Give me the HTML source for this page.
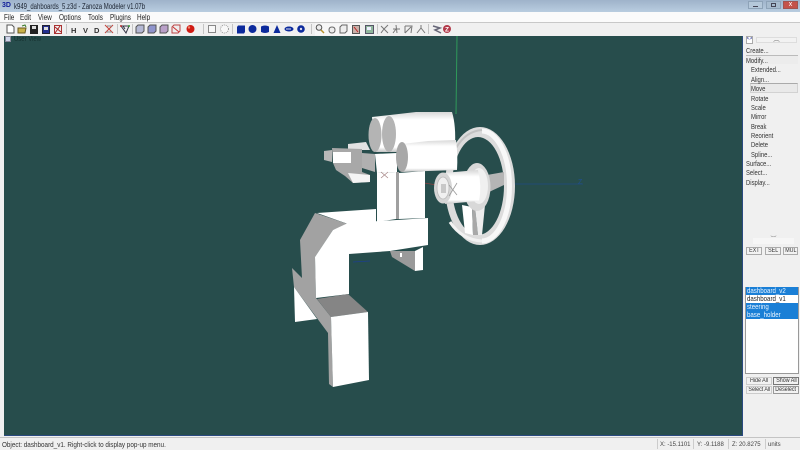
<!DOCTYPE html>
<html><head><meta charset="utf-8">
<style>
html,body{margin:0;padding:0}
body{width:800px;height:450px;overflow:hidden;position:relative;background:#f0f0f0;font-family:"Liberation Sans",sans-serif;color:#222}
.a{position:absolute;white-space:nowrap}
#title{left:0;top:0;width:800px;height:12px;background:linear-gradient(#9fb3ca,#b9cde0)}
#menu{left:0;top:12px;width:800px;height:10px;background:#fbfbfb}
#tb{left:0;top:22px;width:800px;height:14px;background:#f0f0f0;border-top:1px solid #c8c8c8;box-sizing:border-box}
#vp{left:4px;top:36px;width:739px;height:400px;background:#274d4c;border-right:1px solid #2a4a80;border-bottom:1px solid #2a4a80;box-sizing:border-box}
.m{font-size:7.8px;top:12.5px;line-height:10px;color:#222;transform:scaleX(.82);transform-origin:0 0}
.p{font-size:7.2px;line-height:9px;color:#333;transform:scaleX(.82);transform-origin:0 0}
.b{box-sizing:border-box;background:#f2f2f2;border:1px solid #aaa;font-size:6.5px;text-align:center;color:#333;line-height:6px;overflow:hidden}
.b span{display:inline-block;transform:scaleX(.82);transform-origin:50% 50%;margin:0 -6px}
.l{left:746px;width:52px;height:8px;font-size:7.2px;line-height:8px;padding-left:1px;box-sizing:border-box}
.l span{display:inline-block;transform:scaleX(.85);transform-origin:0 0}
.s{background:#1a7fd6;color:#e8f4ff}
.st{font-size:6.8px;top:441px;line-height:8px;color:#444;transform:scaleX(.88);transform-origin:0 0}
.sep{top:24px;width:1px;height:10px;background:#c4c4c4}
</style></head><body>
<div class="a" id="title"></div>
<div class="a" style="left:2px;top:2px;font-size:7px;font-weight:bold;color:#12209a;line-height:8px">3D</div>
<div class="a" style="left:14px;top:1.5px;font-size:8px;line-height:10px;color:#1a2230;transform:scaleX(.75);transform-origin:0 0">k949_dahboards_5.z3d - Zanoza Modeler v1.07b</div>
<div class="a" style="left:748px;top:1px;width:15px;height:8px;background:#b5c8da;border:1px solid #8ea3b8;box-sizing:border-box"><div class="a" style="left:4px;top:4px;width:5px;height:1px;background:#445"></div></div>
<div class="a" style="left:766px;top:1px;width:15px;height:8px;background:#a8bccf;border:1px solid #8ea3b8;box-sizing:border-box"><div class="a" style="left:4px;top:1px;width:5px;height:4px;border:1px solid #445;box-sizing:border-box"></div></div>
<div class="a" style="left:783px;top:1px;width:15px;height:8px;background:#c4524a;border:1px solid #a0534f;box-sizing:border-box;color:#fff;font-size:7px;line-height:6px;text-align:center">x</div>
<div class="a" id="menu"></div>
<div class="a m" style="left:4px">File</div><div class="a m" style="left:20px">Edit</div><div class="a m" style="left:38px">View</div><div class="a m" style="left:59px">Options</div><div class="a m" style="left:88px">Tools</div><div class="a m" style="left:110px">Plugins</div><div class="a m" style="left:137px">Help</div>
<div class="a" id="tb"></div>
<svg class="a" style="left:0;top:22px" width="470" height="14" viewBox="0 22 470 14">
<g stroke-width="1">
<path d="M7 25h5l2 2v6H7z" fill="#fff" stroke="#555"/>
<path d="M18 28h8l-1 5h-7z" fill="#c9b24a" stroke="#6b5a20"/><path d="M22 26l3-1 1 2" fill="none" stroke="#3a7a2a"/>
<rect x="30.500" y="25.500" width="7" height="8" fill="#222" stroke="#222"/><rect x="32" y="26" width="4" height="3" fill="#ddd"/>
<rect x="42.500" y="25.500" width="7" height="8" fill="#24308f" stroke="#223"/><rect x="44" y="27" width="4" height="3" fill="#ddd"/>
<rect x="54.500" y="25.500" width="7" height="8" fill="#eee" stroke="#a33"/><path d="M55 27l6 5M60 26l-5 7" stroke="#a22" fill="none"/>
<text x="71" y="33" font-family="Liberation Sans" font-size="7.5" font-weight="bold" fill="#333">H</text>
<text x="83" y="33" font-family="Liberation Sans" font-size="7.5" font-weight="bold" fill="#333">V</text>
<text x="94" y="33" font-family="Liberation Sans" font-size="7.5" font-weight="bold" fill="#333">D</text>
<path d="M105 25l8 8M113 25l-8 8" stroke="#c8423a" fill="none"/><path d="M107 26h5M106 32h6" stroke="#888" fill="none"/>
<path d="M121 26h8l-3 7zM125 29l-2-3" fill="none" stroke="#334"/><circle cx="121" cy="26" r="1" fill="#b33"/><circle cx="129" cy="26" r="1" fill="#393"/>
<g fill="#b4b8d4" stroke="#555"><path d="M136 27l2-2h6v6l-2 2h-6z"/><path d="M148 27l2-2h6v6l-2 2h-6z" fill="#8f94cc"/><path d="M160 27l2-2h6v6l-2 2h-6z" fill="#b9a0c8"/><path d="M172 27l2-2h6v6l-2 2h-6z" fill="#eee" stroke="#b44"/></g>
<path d="M173 27l6 5" stroke="#c33"/>
<circle cx="190.500" cy="29" r="4" fill="#d01a12"/><circle cx="189" cy="27.500" r="1.200" fill="#f08a70"/>
<rect x="208.500" y="25.500" width="7" height="7" fill="#f8f8f8" stroke="#888"/>
<circle cx="224.500" cy="29" r="4" fill="#f8f8f8" stroke="#999" stroke-dasharray="1 1"/>
<g fill="#0c2a9c"><path d="M237 27l1-1.500h7V32l-1 1.500h-7z"/><circle cx="252.500" cy="29" r="4"/><path d="M261 26.500q4-2 8 0V32q-4 2-8 0z"/><path d="M277 25l3.500 8h-7z"/><ellipse cx="289" cy="29" rx="4.500" ry="2.500"/><circle cx="301" cy="29" r="3.800"/></g>
<circle cx="301" cy="29" r="1.200" fill="#dde"/><path d="M286 29h5" stroke="#dde"/>
<rect x="315" y="23.500" width="45" height="12" fill="#f7f7f7"/>
<circle cx="319" cy="27.500" r="2.800" fill="#eee" stroke="#555"/><path d="M321 30l3 3" stroke="#b8922a" stroke-width="1.500"/>
<path d="M329 30q0-3 3-3t3 3-3 3-3-3" fill="#eee" stroke="#666"/>
<path d="M340 27l2-2h5v6l-2 2h-5z" fill="#eee" stroke="#666"/>
<rect x="352.500" y="25.500" width="7" height="8" fill="#c9b0a8" stroke="#555"/><path d="M354 27l4 5" stroke="#b22"/>
<rect x="365.500" y="25.500" width="8" height="8" fill="#8fb69c" stroke="#556"/><rect x="367" y="27" width="4" height="3" fill="#eef"/>
<g stroke="#777" fill="none"><path d="M381 26l7 7M388 25l-4 4M381 33l3-4"/><path d="M393 29h7M396 25l1 8M393 33l3-4"/><path d="M405 26h7l-1 7M405 33l6-6M405 26v7"/><path d="M417 33l4-5 4 5M421 28v-3"/></g>
<path d="M433 26l7 2-5 2 6 3" stroke="#667" fill="none" stroke-width="1.500"/>
<circle cx="447" cy="29" r="4" fill="#b23a4a"/><text x="445" y="31.500" font-family="Liberation Sans" font-size="6.500" font-weight="bold" fill="#fff">Z</text>
</g>
</svg>
<div class="a sep" style="left:66px"></div><div class="a sep" style="left:117px"></div><div class="a sep" style="left:132px"></div><div class="a sep" style="left:203px"></div><div class="a sep" style="left:232px"></div><div class="a sep" style="left:311px"></div><div class="a sep" style="left:377px"></div><div class="a sep" style="left:428px"></div>

<div class="a" id="vp"></div>
<div class="a" style="left:5px;top:36px;width:6px;height:6px;background:#cfd6ea;border:1px solid #889;box-sizing:border-box"></div>
<div class="a" style="left:14px;top:36px;font-size:7px;line-height:8px;color:#16302f;transform:scaleX(.85);transform-origin:0 0">User View</div>

<svg class="a" style="left:0;top:0" width="744" height="436" viewBox="0 0 744 436">
<defs>
<linearGradient id="cy" x1="0" y1="0" x2="0" y2="1"><stop offset="0" stop-color="#d8d8d8"/><stop offset=".2" stop-color="#fff"/><stop offset=".88" stop-color="#fff"/><stop offset="1" stop-color="#c4c4c4"/></linearGradient>
</defs>
<path d="M457 36L456 114" stroke="#2f9a5a" stroke-width="1" fill="none"/>
<path d="M514 184H583" stroke="#1f4c82" stroke-width=".7" fill="none"/>
<text x="578" y="184" font-family="Liberation Sans" font-size="7" fill="#20508f">Z</text>
<path d="M424 183L437 185" stroke="#8a4040" stroke-width=".7" fill="none"/>
<path d="M353 262L370 261" stroke="#1c3f8f" stroke-width=".8" fill="none"/>

<!-- steering wheel -->
<path fill-rule="evenodd" d="M445 186A35 59 0 1 1 515 186A35 59 0 1 1 445 186ZM452 186A26 49 0 1 0 504 186A26 49 0 1 0 452 186Z" fill="#dcdcdc"/>
<path d="M482 131A27 54 0 0 1 482 241" fill="none" stroke="#f8f8f8" stroke-width="5"/>
<path d="M456 148Q466 131 482 130" fill="none" stroke="#c2c2c2" stroke-width="2"/>
<path d="M450 222Q462 240 482 241" fill="none" stroke="#f2f2f2" stroke-width="3"/>
<path d="M487 175L504 172V185L489 192z" fill="#b5b5b5"/>
<path d="M462 205L472 207L473 235L465 233z" fill="#fff"/>
<path d="M472 207L475 207L478 235L473 235z" fill="#a8a8a8"/>
<path d="M475 207L485 205L482 235L478 235z" fill="#ededed"/>
<ellipse cx="477" cy="187" rx="13.500" ry="24" fill="#d8d8d8"/>
<ellipse cx="479" cy="186" rx="9" ry="18" fill="#f0f0f0"/>
<path d="M443 173L478 170Q482 186 479 201L445 204z" fill="url(#cy)"/>
<ellipse cx="443" cy="188" rx="9" ry="15.500" fill="#d6d6d6"/>
<ellipse cx="443" cy="188" rx="6" ry="11" fill="#f0f0f0" stroke="#bbb" stroke-width=".8"/>
<rect x="441" y="184" width="5" height="9" fill="#c8c8c8"/>
<path d="M449 185L457 195M457 183L449 196" stroke="#9a9a9a" stroke-width=".8" fill="none"/>

<!-- lower frame right leg -->
<path d="M390 251L415 251L415 271L392 257z" fill="#9a9a9a"/>
<path d="M415 251L423 247L423 270L415 271z" fill="#fff"/>
<rect x="400" y="253" width="2" height="4" fill="#fff"/>

<!-- columns -->
<path d="M377 173L396 172V219L377 222z" fill="#fff"/>
<path d="M396 172H399V219H396z" fill="#a0a0a0"/>
<path d="M399 173L425 171V218L399 219z" fill="#fff"/>

<!-- tray & arm -->
<path d="M317 213L376 209V222L348 224z" fill="#fff"/>
<path d="M292 268L302 278L300 240L315 213L348 224L333 230L315 257L316 298L331 317L333 387L329 384L328 333L294 287z" fill="#a2a2a2"/>
<path d="M348 223L428 218V245L390 251L349 254V294L316 298L315 257L333 230z" fill="#fff"/>
<path d="M294 287L317 319L295 322z" fill="#fff"/>
<path d="M317 299L348 294L368 312L331 317z" fill="#858585"/>
<path d="M331 317L368 312L369 380L333 387z" fill="#fff"/>

<!-- left bracket -->
<path d="M348 144L366 142L370 150H348z" fill="#e2e2e2"/>
<path d="M332 148L362 149V172L370 175L370 182L353 183L345 176L336 170L333 163z" fill="#a8a8a8"/>
<path d="M324 151L332 150V162L324 160z" fill="#b8b8b8"/>
<path d="M333 152L351 152V163L333 163z" fill="#fff"/>
<path d="M348 173L370 175V182L353 183z" fill="#f4f4f4"/>

<!-- block -->
<path d="M362 153L375 154V172L362 168z" fill="#b0b0b0"/>
<path d="M375 154L397 153V172L377 173z" fill="#fff"/>
<path d="M381 172L388 178M388 172L381 178" stroke="#a88a8a" stroke-width=".8" fill="none"/>

<!-- back cylinders -->
<path d="M372 117L390 115L416 112L452 112Q456 125 455 145L400 152L376 152z" fill="url(#cy)"/>
<ellipse cx="375" cy="135" rx="6.500" ry="17" fill="#b4b4b4"/>
<ellipse cx="389" cy="134" rx="7" ry="18" fill="#b4b4b4"/>
<!-- front cylinder -->
<path d="M402 144L428 141L456 140Q458 155 457 170L428 171L402 172z" fill="url(#cy)"/>
<ellipse cx="402" cy="157" rx="6" ry="15" fill="#a8a8a8"/>
</svg>

<!-- right panel -->
<div class="a" style="left:744px;top:36px;width:56px;height:402px;background:#f0f0f0"></div>
<div class="a b" style="left:746px;top:36px;width:7px;height:8px;line-height:5px;font-size:6px;background:#fff;color:#24308f"><span>&lt;&gt;</span></div>
<div class="a b" style="left:756px;top:37px;width:41px;height:6px;border-color:#ddd;line-height:4px;color:#777">︵</div>
<div class="a" style="left:746px;top:55px;width:52px;height:9px;background:#ececec;border-top:1px solid #bbb;box-sizing:border-box"></div>
<div class="a" style="left:750px;top:83px;width:48px;height:10px;background:#e9e9e9;border:1px solid #d2d2d2;border-top-color:#aaa;box-sizing:border-box"></div>
<div class="a p" style="left:746px;top:46px">Create...</div>
<div class="a p" style="left:746px;top:56px">Modify...</div>
<div class="a p" style="left:751px;top:65px">Extended...</div>
<div class="a p" style="left:751px;top:75px">Align...</div>
<div class="a p" style="left:751px;top:84px">Move</div>
<div class="a p" style="left:751px;top:94px">Rotate</div>
<div class="a p" style="left:751px;top:103px">Scale</div>
<div class="a p" style="left:751px;top:112px">Mirror</div>
<div class="a p" style="left:751px;top:122px">Break</div>
<div class="a p" style="left:751px;top:131px">Reorient</div>
<div class="a p" style="left:751px;top:140px">Delete</div>
<div class="a p" style="left:751px;top:150px">Spline...</div>
<div class="a p" style="left:746px;top:159px">Surface...</div>
<div class="a p" style="left:746px;top:168px">Select...</div>
<div class="a p" style="left:746px;top:178px">Display...</div>
<div class="a" style="left:753px;top:238px;width:41px;height:6px;background:#f6f6f6;color:#888;font-size:6px;line-height:5px;text-align:center">︶</div>
<div class="a b" style="left:746px;top:247px;width:16px;height:8px"><span>EXT</span></div>
<div class="a b" style="left:765px;top:247px;width:16px;height:8px"><span>SEL</span></div>
<div class="a b" style="left:783px;top:247px;width:15px;height:8px"><span>MUL</span></div>
<div class="a" style="left:745px;top:287px;width:54px;height:87px;background:#fff;border:1px solid #999;box-sizing:border-box"></div>
<div class="a l s" style="top:287px"><span>dashboard_v2</span></div>
<div class="a l" style="top:295px;color:#222"><span>dashboard_v1</span></div>
<div class="a l s" style="top:303px"><span>steering</span></div>
<div class="a l s" style="top:311px"><span>base_holder</span></div>
<div class="a b" style="left:746px;top:377px;width:26px;height:8px;border-color:#ccc"><span>Hide All</span></div>
<div class="a b" style="left:773px;top:377px;width:26px;height:8px;border-color:#777"><span>Show All</span></div>
<div class="a b" style="left:746px;top:386px;width:26px;height:8px;border-color:#ccc"><span>Select All</span></div>
<div class="a b" style="left:773px;top:386px;width:26px;height:8px;border-color:#999"><span>Deselect</span></div>

<!-- status bar -->
<div class="a" style="left:0;top:437px;width:800px;height:13px;background:#f0f0f0;border-top:1px solid #c4c4c4;box-sizing:border-box"></div>
<div class="a st" style="left:2px;color:#333;font-size:7.2px;top:441px">Object: dashboard_v1. Right-click to display pop-up menu.</div>
<div class="a st" style="left:660px">X: -15.1101</div>
<div class="a st" style="left:697px">Y: -9.1188</div>
<div class="a st" style="left:732px">Z: 20.8275</div>
<div class="a st" style="left:768px">units</div>
<div class="a" style="left:657px;top:439px;width:1px;height:10px;background:#ccc"></div>
<div class="a" style="left:693px;top:439px;width:1px;height:10px;background:#ccc"></div>
<div class="a" style="left:728px;top:439px;width:1px;height:10px;background:#ccc"></div>
<div class="a" style="left:765px;top:439px;width:1px;height:10px;background:#ccc"></div>
</body></html>
